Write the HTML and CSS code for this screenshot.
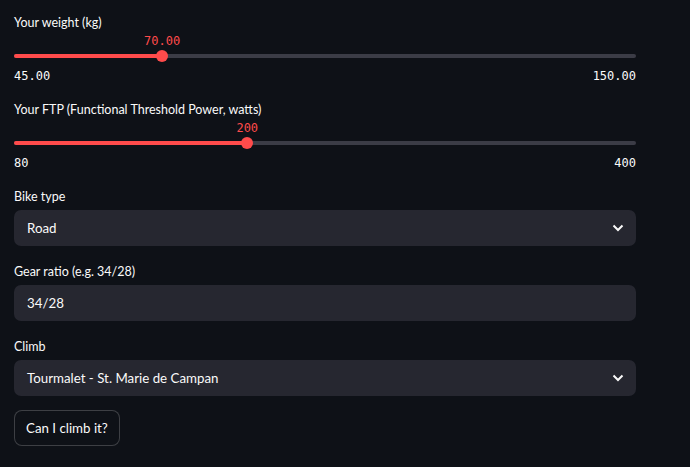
FILE: index.html
```html
<!DOCTYPE html>
<html lang="en">
<head>
  <meta charset="UTF-8">
  <title>Can I climb it?</title>
  <link rel="stylesheet" href="styles.css">
</head>
<body>
  <main class="form">

    <div class="widget">
      <div class="label">Your weight (kg)</div>
      <div class="slider">
        <div class="slider-value-row">
          <span class="slider-value" style="left: 23.81%">70.00</span>
        </div>
        <div class="track">
          <div class="track-fill" style="width: 23.81%"></div>
          <div class="thumb" style="left: 23.81%"></div>
        </div>
        <div class="slider-range">
          <span>45.00</span>
          <span>150.00</span>
        </div>
      </div>
    </div>

    <div class="widget">
      <div class="label">Your FTP (Functional Threshold Power, watts)</div>
      <div class="slider">
        <div class="slider-value-row">
          <span class="slider-value" style="left: 37.5%">200</span>
        </div>
        <div class="track">
          <div class="track-fill" style="width: 37.5%"></div>
          <div class="thumb" style="left: 37.5%"></div>
        </div>
        <div class="slider-range">
          <span>80</span>
          <span>400</span>
        </div>
      </div>
    </div>

    <div class="widget">
      <div class="label">Bike type</div>
      <div class="select">
        <span>Road</span>
        <svg class="chevron" width="12" height="8" viewBox="0 0 12 8"><path d="M1.5 1.5 L6 6 L10.5 1.5" fill="none" stroke="#fafafa" stroke-width="2"/></svg>
      </div>
    </div>

    <div class="widget">
      <div class="label">Gear ratio (e.g. 34/28)</div>
      <input class="text-input" type="text" value="34/28">
    </div>

    <div class="widget">
      <div class="label">Climb</div>
      <div class="select">
        <span>Tourmalet - St. Marie de Campan</span>
        <svg class="chevron" width="12" height="8" viewBox="0 0 12 8"><path d="M1.5 1.5 L6 6 L10.5 1.5" fill="none" stroke="#fafafa" stroke-width="2"/></svg>
      </div>
    </div>

    <button class="btn">Can I climb it?</button>

  </main>
</body>
</html>
```

FILE: styles.css
```css
body {
  margin: 0;
  padding: 0;
  background-color: #0e1117;
  color: #fafafa;
  font-family: Lato, "Open Sans", sans-serif;
}

.form {
  width: 622px;
  padding: 13px 0 0 14px;
  display: flex;
  flex-direction: column;
}

.widget {
  margin-bottom: 16px;
}

.label {
  font-size: 12.5px;
  line-height: 20px;
  height: 20px;
}

.widget .label + .select,
.widget .label + .text-input {
  margin-top: 3px;
}

/* sliders */
.slider {
  font-family: "DejaVu Sans Mono", "Liberation Mono", monospace;
  font-size: 12px;
}

.slider-value-row {
  position: relative;
  height: 16px;
  line-height: 16px;
}

.slider-value {
  position: absolute;
  top: 0;
  transform: translateX(-50%);
  color: #ff4b4b;
}

.track {
  position: relative;
  height: 14px;
}

.track::before {
  content: "";
  position: absolute;
  left: 0;
  right: 0;
  top: 5px;
  height: 4px;
  border-radius: 2px;
  background-color: #3b3c46;
}

.track-fill {
  position: absolute;
  left: 0;
  top: 5px;
  height: 4px;
  border-radius: 2px;
  background-color: #ff4b4b;
}

.thumb {
  position: absolute;
  top: 1px;
  width: 12px;
  height: 12px;
  margin-left: -6px;
  border-radius: 50%;
  background-color: #ff4b4b;
}

.slider-range {
  display: flex;
  justify-content: space-between;
  margin-top: 5px;
  line-height: 16px;
}

/* selects and inputs */
.select,
.text-input {
  box-sizing: border-box;
  width: 100%;
  height: 36px;
  border-radius: 7px;
  background-color: #262730;
  color: #fafafa;
  font-family: Lato, "Open Sans", sans-serif;
  font-size: 13.3px;
}

.select {
  display: flex;
  align-items: center;
  justify-content: space-between;
  padding: 0 12px 0 13px;
}

.text-input {
  display: block;
  border: none;
  outline: none;
  padding: 0 13px;
}

.btn {
  align-self: flex-start;
  margin-top: -2px;
  height: 36px;
  padding: 0 11px;
  border: 1px solid rgba(250, 250, 250, 0.2);
  border-radius: 8px;
  background-color: #0e1117;
  color: #fafafa;
  font-family: Lato, "Open Sans", sans-serif;
  font-size: 13.3px;
  cursor: pointer;
}
```
